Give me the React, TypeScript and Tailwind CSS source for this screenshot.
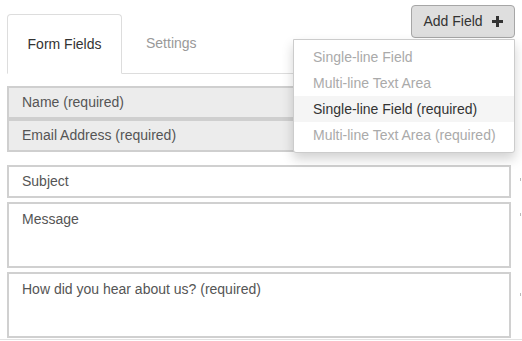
const menuItems = [
  { label: "Single-line Field", active: false },
  { label: "Multi-line Text Area", active: false },
  { label: "Single-line Field (required)", active: true },
  { label: "Multi-line Text Area (required)", active: false },
];

const fields = [
  { label: "Subject", tall: false, mark: "mt-[13px]" },
  { label: "Message", tall: true, mark: "mt-[11px]" },
  { label: "How did you hear about us? (required)", tall: true, mark: "mt-[21px]" },
];

function PlusIcon() {
  return (
    <svg width="11" height="11" viewBox="0 0 11 11" className="ml-[9px]">
      <path d="M4 0h3v4h4v3H7v4H4V7H0V4h4z" fill="#333" />
    </svg>
  );
}

export default function App() {
  return (
    <div className="w-[522px] h-[341px] overflow-hidden bg-white font-['Liberation_Sans',Arial,sans-serif] text-[14px]">
      {/* header: tabs + add field */}
      <div className="flex items-start pl-[7px] pr-[7px]">
        <div className="flex-1 mt-[14px] flex border-b border-[#ddd]">
          <div className="w-[115px] h-[60px] -mb-px flex items-center justify-center border border-[#ddd] border-b-white rounded-t-[4px] bg-white text-[#333]">
            Form Fields
          </div>
          <div className="h-[59px] ml-[2px] px-[22px] flex items-center text-[#999]">
            Settings
          </div>
        </div>
        <div className="relative mt-[5px] z-10">
          <button className="h-[33px] w-[104px] flex items-center justify-center border border-[#a6a6a6] bg-[#dedede] rounded-[4px] text-[#333]">
            Add Field
            <PlusIcon />
          </button>
          <div className="absolute right-0 top-full mt-[1px] w-[222px] bg-white border border-[#ccc] rounded-b-[3px] pt-[4px] pb-[4px] shadow-[0_6px_12px_rgba(0,0,0,0.18)]">
            {menuItems.map((item) => (
              <div
                key={item.label}
                className={
                  item.active
                    ? "h-[26px] flex items-center pl-[19px] bg-[#f5f5f5] text-[#333]"
                    : "h-[26px] flex items-center pl-[19px] text-[#aaa]"
                }
              >
                {item.label}
              </div>
            ))}
          </div>
        </div>
      </div>

      {/* required fixed fields */}
      <div className="pl-[7px] pr-[11px] mt-[12px]">
        <div className="h-[33px] flex items-center pl-[13px] bg-[#ececec] border-2 border-[#cfcfcf] text-[#555]">
          Name (required)
        </div>
        <div className="h-[33px] flex items-center pl-[13px] bg-[#ececec] border-2 border-[#cfcfcf] text-[#555]">
          Email Address (required)
        </div>
      </div>

      {/* editable fields */}
      <div className="pl-[7px] mt-[13px] flex flex-col gap-[4px]">
        {fields.map((f) => (
          <div key={f.label} className="flex">
            <div
              className={
                f.tall
                  ? "w-[504px] h-[66px] pl-[13px] pt-[5px] bg-white border-2 border-[#d0d0d0] text-[#555]"
                  : "w-[504px] h-[33px] pl-[13px] flex items-center bg-white border-2 border-[#d0d0d0] text-[#555]"
              }
            >
              {f.label}
            </div>
            <div className="flex-1 flex justify-end pr-[1px]">
              <div className={`w-px h-[3px] bg-[#bbb] ${f.mark}`} />
            </div>
          </div>
        ))}
      </div>
      <div className="mt-px h-px bg-[#e2e2e2]" />
    </div>
  );
}
